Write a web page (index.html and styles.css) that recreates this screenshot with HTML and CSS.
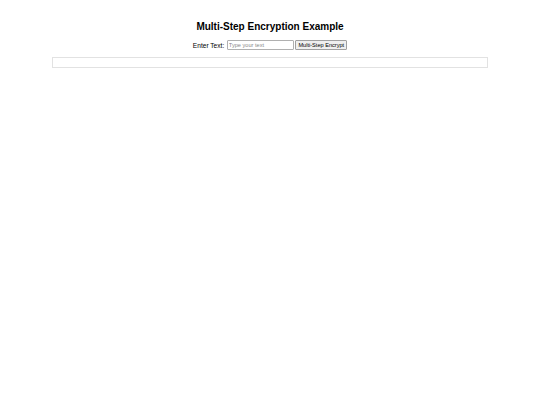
FILE: index.html
```html
<!DOCTYPE html>
<html>
<head>
<meta charset="utf-8">
<link rel="stylesheet" href="styles.css">
</head>
<body>
<div class="page">
  <h1 class="title">Multi-Step Encryption Example</h1>
  <div class="controls">
    <label class="label" for="txt">Enter Text:</label>
    <input class="field" id="txt" type="text" placeholder="Type your text">
    <button class="btn">Multi-Step Encrypt</button>
  </div>
  <div class="output"></div>
</div>
</body>
</html>
```
FILE: styles.css
```css
html, body {
  margin: 0;
  padding: 0;
  background: #ffffff;
}
.page {
  padding: 3.4px;
  font-family: "Liberation Sans", Arial, sans-serif;
  text-align: center;
  color: #000;
}
.title {
  font-size: 10px;
  font-weight: bold;
  margin: 17.5px 0 8px;
  line-height: 1.15;
}
.controls {
  display: flex;
  justify-content: center;
  align-items: center;
  gap: 1.6px;
  font-size: 6.6px;
}
.label {
  margin-right: 1px;
}
.field {
  box-sizing: border-box;
  width: 67px;
  height: 9.5px;
  padding: 0 1px;
  margin: 0;
  font-family: "Liberation Sans", Arial, sans-serif;
  font-size: 5.6px;
  border: 1px solid #b0b0b0;
  border-radius: 1px;
  background: #fff;
}
.field::placeholder {
  color: #8a8a8a;
}
.btn {
  box-sizing: border-box;
  height: 9.5px;
  padding: 0 2px;
  margin: 0;
  font-family: "Liberation Sans", Arial, sans-serif;
  font-size: 5.6px;
  border: 1px solid #a0a0a0;
  border-radius: 1px;
  background: #efefef;
  color: #000;
}
.output {
  box-sizing: border-box;
  width: 436px;
  height: 10.5px;
  margin: 7.5px auto 0;
  border: 1px solid #e2e2e2;
  background: #fff;
}
```
